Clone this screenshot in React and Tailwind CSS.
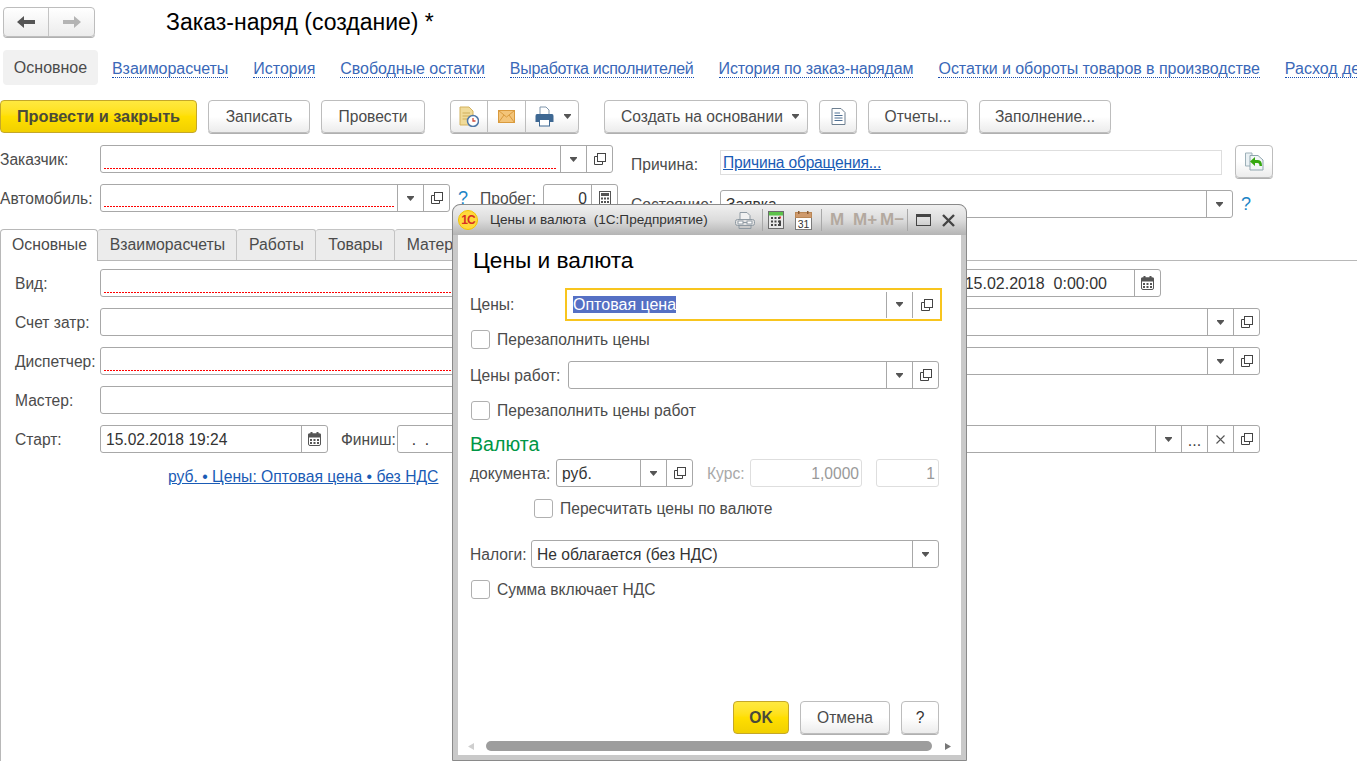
import React from 'react';

// small glyphs used by the input buttons
const Drop = () => (
  <svg width="7" height="5" viewBox="0 0 7 5"><path d="M0 0H7V1L3.500 5L0 1Z" fill="#555" /></svg>
);

const Copy = () => (
  <svg width="12" height="12" viewBox="0 0 12 12" fill="none" stroke="#444">
    <rect x="3.500" y="0.500" width="8" height="8" />
    <path d="M3.500 3.500H0.500V11.500H8.500V8.500" />
  </svg>
);

const Cal = () => (
  <svg width="13" height="14" viewBox="0 0 13 14" fill="#555">
    <rect x="0.5" y="2" width="12" height="11.5" rx="1.5" fill="none" stroke="#555" />
    <rect x="0" y="1.5" width="13" height="4" rx="1" />
    <rect x="2.5" y="0" width="2" height="3" />
    <rect x="8.5" y="0" width="2" height="3" />
    <rect x="2" y="7" width="2" height="2" />
    <rect x="5.5" y="7" width="2" height="2" />
    <rect x="9" y="7" width="2" height="2" />
    <rect x="2" y="10" width="2" height="2" />
    <rect x="5.5" y="10" width="2" height="2" />
    <rect x="9" y="10" width="2" height="2" />
  </svg>
);

const Calc = () => (
  <svg width="12" height="14" viewBox="0 0 12 14" fill="#555">
    <rect x="0.5" y="0.5" width="11" height="13" fill="none" stroke="#555" />
    <rect x="2" y="2" width="8" height="3" />
    <rect x="2" y="6.5" width="2" height="2" />
    <rect x="5" y="6.5" width="2" height="2" />
    <rect x="8" y="6.5" width="2" height="2" />
    <rect x="2" y="10" width="2" height="2" />
    <rect x="5" y="10" width="2" height="2" />
    <rect x="8" y="10" width="2" height="2" />
  </svg>
);

const Cross = () => (
  <svg width="9" height="9" viewBox="0 0 9 9" stroke="#555" strokeWidth="1.1"><path d="M0.5 0.5L8.5 8.5M8.5 0.5L0.5 8.5" /></svg>
);

const glyphs = {
  drop: <Drop />,
  copy: <Copy />,
  cal: <Cal />,
  calc: <Calc />,
  x: <Cross />,
  dots: <span className="text-[#444] text-[16px] leading-none mt-[3px]">...</span>,
};

// 1C-style input: text part plus square buttons on the right
function Field({ className = '', text, textClass = '', required, raised, short, buttons = [] }) {
  return (
    <div className={`flex h-7 bg-white border border-[#a8a8a8] rounded-[3px] shrink-0 ${className}`}>
      <div className={`flex-1 min-w-0 flex mx-[3px] ${raised ? 'mb-[4px]' : 'mb-[3px]'} ${required ? 'bg-[repeating-linear-gradient(90deg,#ff0000_0,#ff0000_2px,transparent_2px,transparent_3px)] bg-left-bottom bg-no-repeat' : ''} ${required ? (short ? 'bg-[length:600px_1px]' : 'bg-[length:100%_1px]') : ''}`}>
        <span className={`flex-1 pl-[2px] leading-[27px] whitespace-pre text-[#333] ${textClass}`}>{text}</span>
      </div>
      {buttons.map((b, i) => (
        <div key={i} className="w-[26px] border-l border-[#a8a8a8] flex items-center justify-center shrink-0">
          {glyphs[b]}
        </div>
      ))}
    </div>
  );
}

function Btn({ className = '', children, yellow }) {
  return (
    <div
      className={`h-[33px] flex items-center justify-center rounded-[4px] border shrink-0 whitespace-nowrap ${
        yellow
          ? 'bg-linear-to-b from-[#ffe93f] via-[#ffdf00] to-[#f1d000] border-[#c4a72a] font-bold text-[#4a4a3a]'
          : 'bg-linear-to-b from-white via-white to-[#ececec] border-[#bdbdbd] text-[#4b4b4b] shadow-[0_1px_0_#b0b0b0]'
      } ${className}`}
    >
      {children}
    </div>
  );
}

function Check({ className = '', label }) {
  return (
    <div className={`flex items-center h-[19px] gap-[7px] ${className}`}>
      <div className="w-[19px] h-[19px] border border-[#b0b0b0] rounded-[3px] bg-white shrink-0" />
      <span className="text-[#4b4b4b] whitespace-nowrap">{label}</span>
    </div>
  );
}

const Label = ({ className = '', children }) => (
  <span className={`text-[#4b4b4b] whitespace-nowrap shrink-0 pt-[2px] ${className}`}>{children}</span>
);

const DocClockIcon = () => (
  <svg width="20" height="21" viewBox="0 0 20 21">
    <path d="M1 1H10L14 5V19H1Z" fill="#f0db9a" stroke="#d3b25e" />
    <path d="M3.5 7H11M3.5 10H11M3.5 13H8" stroke="#cfae5b" />
    <circle cx="14" cy="15" r="5.5" fill="#fff" stroke="#4f78a8" strokeWidth="1.5" />
    <path d="M14 12V15H16.5" stroke="#d04a3a" strokeWidth="1.3" fill="none" />
  </svg>
);

const MailIcon = () => (
  <svg width="17" height="13" viewBox="0 0 17 13">
    <rect x="0.5" y="0.5" width="16" height="12" fill="#f3c479" stroke="#d99a3d" />
    <path d="M0.5 0.5L8.5 7L16.5 0.5M0.5 12.5L6 5M16.5 12.5L11 5" fill="none" stroke="#d99a3d" />
  </svg>
);

const PrinterIcon = () => (
  <svg width="19" height="21" viewBox="0 0 19 21">
    <path d="M5 1H11L14 4V9H5Z" fill="#fff" stroke="#7f95ab" />
    <path d="M2 8H17Q18.500 8 18.500 10V16H15V13H4V16H0.500V10Q0.500 8 2 8Z" fill="#3e6893" />
    <rect x="4.500" y="13.500" width="10" height="6.500" fill="#fff" stroke="#3e6893" />
  </svg>
);

const ReportIcon = () => (
  <svg width="15" height="17" viewBox="0 0 15 17">
    <path d="M1 0.500H10L14 4.500V16.500H1Z" fill="#fff" stroke="#6d7f90" />
    <path d="M3.500 5H9M3.500 7.500H11.500M3.500 10H11.500M3.500 12.500H11.500" stroke="#4f7094" />
  </svg>
);

const ReturnDocIcon = () => (
  <svg width="19" height="19" viewBox="0 0 19 19">
    <path d="M0.500 1H7V14H0.500Z" fill="#eaf1f4" stroke="#9db0b8" />
    <path d="M5 3.500H13L18 8V18H5Z" fill="#f2f6f7" stroke="#8fa5ae" />
    <path d="M5 9.500L10 5V8H13Q17 8 17 14H14.500Q14.500 11 12.500 11H10V14Z" fill="#35a80f" />
  </svg>
);

const ToolPrintIcon = () => (
  <svg width="20" height="17" viewBox="0 0 20 17" fill="none" stroke="#8f9aa3">
    <path d="M5 7V0.500H12L15 3.500V7" fill="#f1f1f1" />
    <rect x="0.500" y="7.500" width="19" height="6" rx="2" fill="#e4e4e4" />
    <rect x="3" y="9" width="5" height="3" fill="#fff" />
    <rect x="12" y="9" width="5" height="3" fill="#fff" />
    <path d="M8 10.500H12M4 14V16.500H16V14" />
  </svg>
);

const ToolCalcIcon = () => (
  <svg width="16" height="18" viewBox="0 0 16 18">
    <rect x="0.500" y="0.500" width="15" height="17" fill="#e9e9e9" stroke="#6c6c6c" />
    <rect x="1" y="1" width="14" height="3.500" fill="#5cc24a" />
    <rect x="11" y="5.500" width="2" height="2" fill="#e03030" />
    {[3, 6.500, 10].map((x) =>
      [6, 9.500, 13].map((y) => <rect key={`${x}-${y}`} x={x} y={y} width="2" height="2" fill="#444" />)
    )}
    <rect x="11" y="9.500" width="2" height="5.500" fill="#444" />
  </svg>
);

const ToolCalendarIcon = () => (
  <svg width="17" height="19" viewBox="0 0 17 19">
    <rect x="0.500" y="1.500" width="16" height="17" fill="#fff" stroke="#7a7a7a" />
    <rect x="0.500" y="1.500" width="16" height="5" fill="#cf9a6c" stroke="#b98655" />
    <rect x="3" y="0" width="1.500" height="3" fill="#8a5c34" />
    <rect x="12" y="0" width="1.500" height="3" fill="#8a5c34" />
    <text x="8.500" y="16.500" textAnchor="middle" fontSize="10.500" fill="#333" fontFamily="Liberation Sans">31</text>
  </svg>
);

const navLinks = [
  ['Взаиморасчеты', 'tracking-[-0.05px]'],
  ['История', ''],
  ['Свободные остатки', 'tracking-[-0.05px]'],
  ['Выработка исполнителей', 'tracking-[-0.27px]'],
  ['История по заказ-нарядам', 'tracking-[-0.12px]'],
  ['Остатки и обороты товаров в производстве', 'tracking-[-0.05px]'],
  ['Расход деталей', ''],
];

export default function App() {
  return (
    <div className="relative w-[1357px] h-[761px] overflow-hidden bg-white text-[15.6px] font-['Liberation_Sans',Arial,sans-serif] flex flex-col">
      {/* Header */}
      <div className="flex items-center h-[30px] mt-[7px] ml-[3px] shrink-0">
        <div className="flex w-[92px] h-[30px] border border-[#bdbdbd] rounded-[4px] bg-linear-to-b from-white to-[#ececec] shadow-[0_1px_0_#b0b0b0]">
          <div className="w-[45px] flex items-center justify-center border-r border-[#c4c4c4]">
            <svg width="18" height="12" viewBox="0 0 18 12"><path d="M0 6L7 0V4H18V8H7V12Z" fill="#555" /></svg>
          </div>
          <div className="flex-1 flex items-center justify-center">
            <svg width="18" height="12" viewBox="0 0 18 12"><path d="M18 6L11 0V4H0V8H11V12Z" fill="#b4b4b4" /></svg>
          </div>
        </div>
        <h1 className="ml-[71px] text-[23px] leading-[26px] text-black whitespace-nowrap">Заказ-наряд (создание) *</h1>
      </div>

      {/* Section nav */}
      <div className="flex items-center h-[35px] mt-[13px] ml-[3px] shrink-0 whitespace-nowrap text-[16px]">
        <div className="w-[95px] h-[35px] bg-[#f1f1f1] rounded-[4px] flex items-center justify-center text-[#4b4b4b] mr-[14px] shrink-0">Основное</div>
        <div className="flex gap-[25px] mt-[2px]">
          {navLinks.map(([t, cls]) => (
            <span key={t} className={`text-[#3a68b8] border-b border-dotted border-[#1a4fb0] leading-[17px] shrink-0 ${cls}`}>{t}</span>
          ))}
        </div>
      </div>

      {/* Command bar */}
      <div className="flex mt-[15px] shrink-0">
        <Btn yellow className="w-[197px] text-[16.3px]">Провести и закрыть</Btn>
        <Btn className="w-[102px] ml-[11px]">Записать</Btn>
        <Btn className="w-[104px] ml-[11px]">Провести</Btn>
        <div className="flex w-[129px] h-[33px] ml-[25px] border border-[#bdbdbd] rounded-[4px] bg-linear-to-b from-white via-white to-[#ececec] shadow-[0_1px_0_#b0b0b0]">
          <div className="w-[37px] flex items-center justify-center border-r border-[#bdbdbd]"><DocClockIcon /></div>
          <div className="w-[38px] flex items-center justify-center border-r border-[#bdbdbd]"><MailIcon /></div>
          <div className="flex-1 flex items-center pl-[9px] gap-[10px]"><PrinterIcon /><Drop /></div>
        </div>
        <Btn className="w-[204px] ml-[25px] gap-[9px] pl-[8px]">Создать на основании <Drop /></Btn>
        <Btn className="w-[38px] ml-[11px]"><ReportIcon /></Btn>
        <Btn className="w-[100px] ml-[11px]">Отчеты...</Btn>
        <Btn className="w-[132px] ml-[11px]">Заполнение...</Btn>
      </div>

      {/* Header fields */}
      <div className="flex mt-[12px] shrink-0">
        <div className="w-[631px] shrink-0">
          <div className="flex items-center">
            <Label className="w-[100px]">Заказчик:</Label>
            <Field className="w-[513px]" required buttons={['drop', 'copy']} />
          </div>
          <div className="flex items-center mt-[11px]">
            <Label className="w-[100px]">Автомобиль:</Label>
            <Field className="w-[350px]" required raised buttons={['drop', 'copy']} />
            <span className="ml-[8px] w-[22px] text-[#1c84c6] text-[18px] leading-none">?</span>
            <Label className="w-[63px]">Пробег:</Label>
            <Field className="w-[75px]" text="0" textClass="text-right pr-[1px]" buttons={['calc']} />
          </div>
        </div>
        <div>
          <div className="flex items-start">
            <Label className="w-[89px] mt-[6px]">Причина:</Label>
            <div className="w-[502px] h-[25px] mt-[5px] border border-[#dedede] pl-[2px] leading-[23px]">
              <span className="text-[#1a5bb5] underline tracking-[-0.2px]">Причина обращения...</span>
            </div>
            <Btn className="w-[38px] ml-[13px]"><ReturnDocIcon /></Btn>
          </div>
          <div className="flex items-center mt-[12px]">
            <Label className="w-[89px]">Состояние:</Label>
            <Field className="w-[513px]" text="Заявка" buttons={['drop']} />
            <span className="ml-[8px] text-[#1c84c6] text-[18px] leading-none">?</span>
          </div>
        </div>
      </div>

      {/* Tabs */}
      <div className="flex h-[32px] mt-[11px] shrink-0 text-[#4b4b4b] text-[15.8px]">
        <div className="w-[98px] border border-b-0 border-[#b8b8b8] rounded-t-[4px] flex items-center justify-center pb-[2px] pl-[1px] bg-white">Основные</div>
        <div className="flex-1 flex border-b border-[#b8b8b8]">
          {[['Взаиморасчеты', 'w-[139px]'], ['Работы', 'w-[79px]'], ['Товары', 'w-[79px]'], ['Материалы', 'w-[108px]']].map(([t, w]) => (
            <div key={t} className={`${w} h-[31px] border-t border-r border-[#c4c4c4] bg-[#ececec] rounded-t-[3px] flex items-center justify-center pl-[1px] whitespace-nowrap`}>{t}</div>
          ))}
        </div>
      </div>

      {/* Tab panel */}
      <div className="flex-1 border-l border-[#b8b8b8] pl-[14px] pt-[8px] flex flex-col gap-[11px] w-[1260px]">
        <div className="flex items-center">
          <Label className="w-[85px]">Вид:</Label>
          <Field className="w-[700px]" required />
          <Field className="w-[341px] ml-[20px]" text="15.02.2018  0:00:00" textClass="text-right pr-[24px] text-[16px]" buttons={['cal']} />
        </div>
        <div className="flex items-center">
          <Label className="w-[85px]">Счет затр:</Label>
          <Field className="flex-1" buttons={['drop', 'copy']} />
        </div>
        <div className="flex items-center">
          <Label className="w-[85px]">Диспетчер:</Label>
          <Field className="flex-1" required short buttons={['drop', 'copy']} />
        </div>
        <div className="flex items-center">
          <Label className="w-[85px]">Мастер:</Label>
          <Field className="w-[600px]" />
        </div>
        <div className="flex items-center">
          <Label className="w-[85px]">Старт:</Label>
          <Field className="w-[228px]" text="15.02.2018 19:24" buttons={['cal']} />
          <Label className="w-[56px] ml-[13px]">Финиш:</Label>
          <Field className="flex-1" text="  .  ." buttons={['drop', 'dots', 'x', 'copy']} />
        </div>
        <div className="pl-[153px] mt-[1px]">
          <span className="text-[#1a5bb5] underline whitespace-nowrap text-[15.7px]">руб. • Цены: Оптовая цена • без НДС</span>
        </div>
      </div>

      {/* Modal window */}
      <div className="absolute left-[452px] top-[204px] w-[515px] h-[557px] border border-[#8a8a8a] rounded-t-[8px] bg-[#c9c9c9] flex flex-col overflow-hidden">
        <div className="h-[30px] shrink-0 flex items-center bg-linear-to-b from-[#f0f0f0] via-[#dcdcdc] to-[#b4b4b4] rounded-t-[8px]">
          <div className="w-[20px] h-[20px] ml-[5px] rounded-full bg-[#ffd93b] border border-[#f2c200] flex items-center justify-center text-[#d62f24] text-[12px] font-bold leading-none tracking-[-1px]">1С</div>
          <span className="ml-[12px] w-[245px] text-[13.6px] text-[#333] whitespace-pre">Цены и валюта  (1С:Предприятие)</span>
          <ToolPrintIcon />
          <div className="w-px h-[22px] bg-[#a8a8a8] ml-[7px]" />
          <div className="ml-[5px]"><ToolCalcIcon /></div>
          <div className="ml-[11px]"><ToolCalendarIcon /></div>
          <div className="w-px h-[22px] bg-[#a8a8a8] ml-[9px]" />
          <span className="ml-[8px] text-[#b3a99f] font-bold text-[17px] w-[23px]">M</span>
          <span className="text-[#b3a99f] font-bold text-[17px] w-[27px]">M+</span>
          <span className="text-[#b3a99f] font-bold text-[17px] w-[27px]">M−</span>
          <div className="w-px h-[22px] bg-[#a8a8a8]" />
          <div className="ml-[8px] w-[15px] h-[12px] border border-[#444] border-t-[3px]" />
          <svg className="ml-[11px]" width="13" height="13" viewBox="0 0 13 13" stroke="#444" strokeWidth="2.4"><path d="M1 1L12 12M12 1L1 12" /></svg>
        </div>

        <div className="flex-1 mx-[5px] mb-[5px] bg-white flex flex-col min-h-0">
          <div className="flex-1 flex flex-col pl-[12px] pr-[22px] pt-[13px] min-h-0">
            <div className="text-[22.7px] leading-[24px] text-black ml-[3px] mb-[16px] whitespace-nowrap">Цены и валюта</div>

            <div className="flex items-center h-[33px]">
              <span className="w-[95px] text-[#4b4b4b] shrink-0">Цены:</span>
              <div className="flex-1 mr-[-3px] h-[33px] border-2 border-[#f8c51e] flex items-center pl-[6px]">
                <span className="flex-1 leading-[18px] text-[16px]"><span className="bg-[#5570c4] text-white">Оптовая цена</span></span>
                <div className="w-[26px] h-[26px] border-l border-[#a8a8a8] flex items-center justify-center"><Drop /></div>
                <div className="w-[28px] h-[26px] border-l border-[#a8a8a8] flex items-center justify-center"><Copy /></div>
              </div>
            </div>

            <Check className="mt-[9px] ml-[1px]" label="Перезаполнить цены" />

            <div className="flex items-center mt-[12px]">
              <Label className="w-[98px]">Цены работ:</Label>
              <Field className="flex-1" buttons={['drop', 'copy']} />
            </div>

            <Check className="mt-[12px] ml-[1px]" label="Перезаполнить цены работ" />

            <div className="text-[#009645] text-[19.6px] leading-[20px] mt-[14px]">Валюта</div>

            <div className="flex items-center mt-[5px]">
              <Label className="w-[86px]">документа:</Label>
              <Field className="w-[137px]" text="руб." buttons={['drop', 'copy']} />
              <Label className="w-[43px] ml-[14px] text-[#a8a8a8]">Курс:</Label>
              <div className="w-[112px] h-7 border border-[#dedede] rounded-[3px] text-right pr-[2px] leading-[27px] text-[#999]">1,0000</div>
              <div className="w-[63px] h-7 ml-[14px] border border-[#dedede] rounded-[3px] text-right pr-[3px] leading-[27px] text-[#999]">1</div>
            </div>

            <Check className="mt-[12px] ml-[64px]" label="Пересчитать цены по валюте" />

            <div className="flex items-center mt-[22px]">
              <Label className="w-[61px]">Налоги:</Label>
              <Field className="flex-1" text="Не облагается (без НДС)" buttons={['drop']} />
            </div>

            <Check className="mt-[12px] ml-[1px]" label="Сумма включает НДС" />

            <div className="mt-auto flex justify-end gap-[11px]">
              <Btn yellow className="w-[56px]">OK</Btn>
              <Btn className="w-[90px]">Отмена</Btn>
              <Btn className="w-[38px] text-[#333]">?</Btn>
            </div>
          </div>

          {/* Scrollbar */}
          <div className="h-[10px] mt-[7px] mb-[4px] shrink-0 flex items-center pl-[10px] pr-[10px]">
            <svg width="6" height="7" viewBox="0 0 6 7"><path d="M6 0V7L0 3.500Z" fill="#cfcfcf" /></svg>
            <div className="ml-[12px] w-[446px] h-[10px] rounded-full bg-[#9d9d9d]" />
            <svg className="ml-[13px]" width="6" height="7" viewBox="0 0 6 7"><path d="M0 0V7L6 3.500Z" fill="#777" /></svg>
          </div>
        </div>
      </div>
    </div>
  );
}
